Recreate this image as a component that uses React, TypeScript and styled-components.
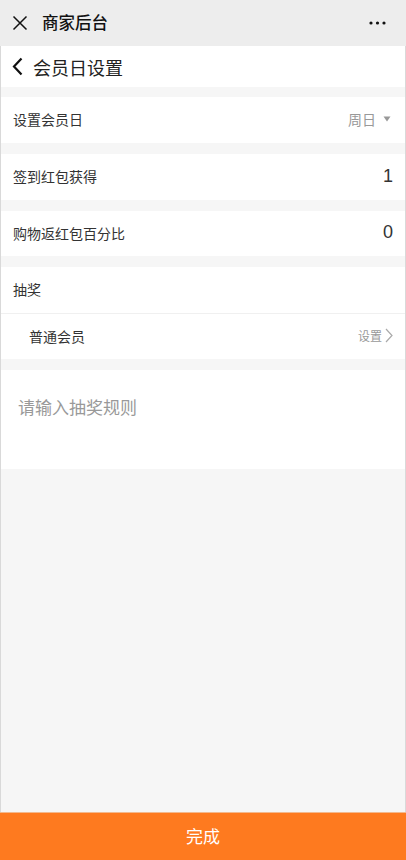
import styled, { createGlobalStyle } from "styled-components";

const GlobalStyle = createGlobalStyle`
  html, body {
    margin: 0;
    padding: 0;
    background: #f5f5f5;
  }
  body {
    font-family: "Noto Sans CJK SC", "Liberation Sans", sans-serif;
    color: #333;
  }
`;

const Page = styled.div`
  display: flex;
  flex-direction: column;
  height: 860px;
  width: 406px;
  overflow: hidden;
`;

const TopBar = styled.div`
  display: flex;
  align-items: center;
  height: 46px;
  padding: 0 20px 0 12px;
  background: #ededed;
  box-sizing: border-box;
  flex-shrink: 0;
`;

const BarTitle = styled.div`
  flex: 1;
  margin-left: 14px;
  font-size: 16.5px;
  font-weight: 500;
  color: #111;
  margin-top: -2px;
`;

const Body = styled.div`
  flex: 1;
  display: flex;
  flex-direction: column;
  border-left: 1px solid #d9d9d9;
  border-right: 1px solid #d9d9d9;
  background: #f6f6f6;
`;

const Header = styled.div`
  display: flex;
  align-items: center;
  gap: 10px;
  height: 41px;
  padding: 0 11px;
  background: #fff;
  font-size: 18px;
  color: #222;
`;

const Card = styled.div<{ $gap?: number }>`
  margin-top: ${(p) => p.$gap ?? 11}px;
  background: #fff;
`;

const Row = styled.div<{ $indent?: boolean; $divider?: boolean; $h?: number }>`
  display: flex;
  align-items: center;
  height: ${(p) => p.$h ?? 46}px;
  padding: 0 12px 2px ${(p) => (p.$indent ? 28 : 12)}px;
  box-sizing: border-box;
  font-size: 14px;
  color: #333;
  border-top: ${(p) => (p.$divider ? "1px solid #f0f0f0" : "none")};
`;

const Label = styled.div`
  flex: 1;
`;

const Picker = styled.div`
  display: flex;
  align-items: center;
  gap: 7px;
  color: #999;
  font-size: 14px;
  margin-right: 2px;
`;

const Value = styled.div`
  font-size: 18px;
  color: #333;
  font-family: "Liberation Sans", sans-serif;
`;

const Link = styled.div`
  display: flex;
  align-items: center;
  gap: 3px;
  color: #999;
  font-size: 12px;
`;

const Rules = styled.div`
  margin-top: 11px;
  height: 99px;
  background: #fff;
  padding: 24px 17px 0;
  box-sizing: border-box;
  font-size: 17px;
  color: #999;
`;

const Spacer = styled.div`
  flex: 1;
`;

const Done = styled.button`
  flex-shrink: 0;
  height: 48px;
  width: 100%;
  border: none;
  background: #fe7a1f;
  color: #fff;
  font-size: 17px;
  font-family: inherit;
  border-top: 1px solid #f3b98e;
  padding: 0 0 3px;
`;

export default function App() {
  return (
    <>
      <GlobalStyle />
      <Page>
        <TopBar>
          <svg width="16" height="16" viewBox="0 0 16 16">
            <path d="M1.5 1.5 L14.5 14.5 M14.5 1.5 L1.5 14.5" stroke="#111" strokeWidth="1.5" />
          </svg>
          <BarTitle>商家后台</BarTitle>
          <svg width="17" height="4" viewBox="0 0 17 4">
            <circle cx="2" cy="2" r="1.6" fill="#111" />
            <circle cx="8.5" cy="2" r="1.6" fill="#111" />
            <circle cx="15" cy="2" r="1.6" fill="#111" />
          </svg>
        </TopBar>
        <Body>
          <Header>
            <svg width="11" height="19" viewBox="0 0 11 19">
              <path d="M9.5 1.5 L2 9.5 L9.5 17.5" fill="none" stroke="#111" strokeWidth="2.2" />
            </svg>
            <span>会员日设置</span>
          </Header>
          <Card $gap={10}>
            <Row>
              <Label>设置会员日</Label>
              <Picker>
                周日
                <svg width="8" height="6" viewBox="0 0 8 6">
                  <path d="M0.5 0.5 L7.5 0.5 L4 5.5 Z" fill="#999" />
                </svg>
              </Picker>
            </Row>
          </Card>
          <Card>
            <Row>
              <Label>签到红包获得</Label>
              <Value>1</Value>
            </Row>
          </Card>
          <Card>
            <Row $h={45}>
              <Label>购物返红包百分比</Label>
              <Value>0</Value>
            </Row>
          </Card>
          <Card>
            <Row>
              <Label>抽奖</Label>
            </Row>
            <Row $indent $divider>
              <Label>普通会员</Label>
              <Link>
                设置
                <svg width="8" height="15" viewBox="0 0 8 15">
                  <path d="M1 1 L7 7.5 L1 14" fill="none" stroke="#aaa" strokeWidth="1.2" />
                </svg>
              </Link>
            </Row>
          </Card>
          <Rules>请输入抽奖规则</Rules>
          <Spacer />
        </Body>
        <Done>完成</Done>
      </Page>
    </>
  );
}
